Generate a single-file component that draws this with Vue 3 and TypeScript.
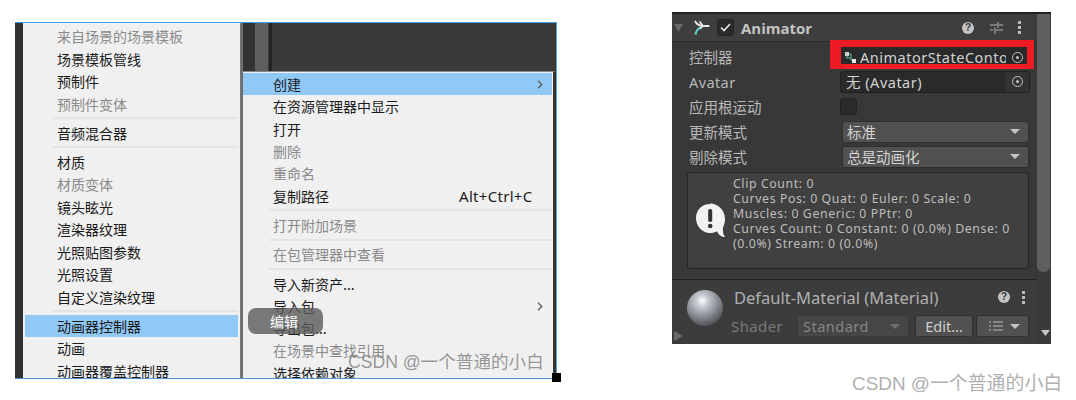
<script setup lang="ts">
interface Item { t?: string; off?: boolean; sel?: boolean; sep?: boolean; key?: string; arrow?: boolean }
const left: Item[] = [
  { t: '来自场景的场景模板', off: true }, { t: '场景模板管线' }, { t: '预制件' }, { t: '预制件变体', off: true }, { sep: true },
  { t: '音频混合器' }, { sep: true },
  { t: '材质' }, { t: '材质变体', off: true }, { t: '镜头眩光' }, { t: '渲染器纹理' }, { t: '光照贴图参数' }, { t: '光照设置' }, { t: '自定义渲染纹理' }, { sep: true },
  { t: '动画器控制器', sel: true }, { t: '动画' }, { t: '动画器覆盖控制器' },
]
const right: Item[] = [
  { t: '创建', sel: true, arrow: true }, { t: '在资源管理器中显示' }, { t: '打开' }, { t: '删除', off: true }, { t: '重命名', off: true },
  { t: '复制路径', key: 'Alt+Ctrl+C' }, { sep: true }, { t: '打开附加场景', off: true }, { sep: true }, { t: '在包管理器中查看', off: true }, { sep: true },
  { t: '导入新资产...' }, { t: '导入包', arrow: true }, { t: '导出包...' }, { t: '在场景中查找引用', off: true }, { t: '选择依赖对象' },
]
const stats = ['Clip Count: 0', 'Curves Pos: 0 Quat: 0 Euler: 0 Scale: 0', 'Muscles: 0 Generic: 0 PPtr: 0', 'Curves Count: 0 Constant: 0 (0.0%) Dense: 0', '(0.0%) Stream: 0 (0.0%)']
</script>

<template>
  <div class="page">
    <section class="shot">
      <div class="strip"></div>
      <div class="menu menu-left">
        <template v-for="(m, i) in left" :key="i">
          <div v-if="m.sep" class="sep"></div>
          <div v-else class="item" :class="{ off: m.off, sel: m.sel }"><span>{{ m.t }}</span></div>
        </template>
      </div>
      <div class="gap"></div>
      <div class="rightside">
        <div class="backdrop">
          <span class="bd-a"></span><span class="bd-b"></span><span class="bd-c"></span>
        </div>
        <div class="menu menu-right">
          <template v-for="(m, i) in right" :key="i">
            <div v-if="m.sep" class="sep"></div>
            <div v-else class="item" :class="{ off: m.off, sel: m.sel }">
              <span>{{ m.t }}</span>
              <span v-if="m.key" class="key">{{ m.key }}</span>
              <svg v-if="m.arrow" class="chev" width="6" height="9" viewBox="0 0 6 9"><path d="M1 .8 4.800 4.500 1 8.200" fill="none" stroke="#555" stroke-width="1.200" /></svg>
            </div>
          </template>
        </div>
      </div>
      <div class="bubble">编辑</div>
      <div class="mark mark-left">CSDN @一个普通的小白</div>
      <div class="handle"></div>
    </section>

    <div class="right-col">
      <section class="inspector">
        <div class="main">
          <header class="head">
            <svg class="tri" width="9" height="8" viewBox="0 0 9 8"><path d="M0 0h9L4.500 8z" fill="#6a6a6a" /></svg>
            <svg class="anim" width="16" height="15" viewBox="0 0 16 15">
              <path d="M1 1c1.500 3 3.500 4.500 7 5M5.500 1.500 9 6l-3.500 3M9 6h6.500" fill="none" stroke="#e8e8e8" stroke-width="1.800" />
              <path d="M6 7.500C3.500 9 2 11.500 1.500 14.500" fill="none" stroke="#5fe0d0" stroke-width="2" />
            </svg>
            <span class="check">
              <svg width="11" height="9" viewBox="0 0 11 9"><path d="M1 4.500 4 7.500 10 1" fill="none" stroke="#e6e6e6" stroke-width="1.600" /></svg>
            </span>
            <b class="title">Animator</b>
            <span class="q">?</span>
            <svg class="sliders" width="13" height="12" viewBox="0 0 13 12"><path d="M0 3h7M9 3h4M8 0v6M0 8h3M6 8h7M5 5.500v6.500" fill="none" stroke="#b5b5b5" /></svg>
            <span class="dots"><i></i><i></i><i></i></span>
          </header>

          <div class="row first">
            <label>控制器</label>
            <div class="obj obj-red">
              <svg width="13" height="13" viewBox="0 0 13 13"><rect x="1" y="1" width="4" height="4" fill="#cfcfcf" /><rect x="8" y="8" width="4" height="4" fill="#e8e8e8" /><path d="M5 3h2v6h1M3 5v2h3" fill="none" stroke="#58c8b8" /></svg>
              <span class="objname">AnimatorStateConto</span>
              <span class="pick"><i></i></span>
              <div class="redbox"></div>
            </div>
          </div>
          <div class="row">
            <label class="lat">Avatar</label>
            <div class="obj"><span class="objname pad">无 (Avatar)</span><span class="pick lit"><i></i></span></div>
          </div>
          <div class="row">
            <label>应用根运动</label>
            <span class="box"></span>
          </div>
          <div class="row">
            <label>更新模式</label>
            <div class="drop"><span>标准</span><em></em></div>
          </div>
          <div class="row">
            <label>剔除模式</label>
            <div class="drop"><span>总是动画化</span><em></em></div>
          </div>

          <div class="help">
            <svg class="warn" width="31" height="36" viewBox="0 0 31 36">
              <path d="M15 1C7 1 1 7 1 15s6 15 14 15c3 0 5-.6 7-1.800 1 2.800 4 5.800 8 5.800-2-2.500-2.400-5.800-2-9.500 1.300-2.500 2-5.500 2-8.500 0-9-7-15.500-15-15.500z" fill="#f2f2f2" />
              <rect x="13.200" y="6" width="4" height="13" rx="1.800" fill="#333" />
              <circle cx="15.200" cy="23" r="2.300" fill="#333" />
            </svg>
            <div class="stats"><div v-for="s in stats" :key="s">{{ s }}</div></div>
          </div>

          <div class="mat">
            <div class="mat-top">
              <span class="ball"></span>
              <div class="mat-body">
                <div class="mat-title">
                  <span>Default-Material (Material)</span>
                  <span class="q q2">?</span>
                  <span class="dots dots2"><i></i><i></i><i></i></span>
                </div>
                <div class="mat-tools">
                  <span class="shader">Shader</span>
                  <div class="drop d-std"><span>Standard</span><em></em></div>
                  <div class="btn">Edit...</div>
                  <div class="btn list">
                    <svg width="14" height="10" viewBox="0 0 14 10"><path d="M4 1h10M4 5h10M4 9h10M0 1h2M0 5h2M0 9h2" stroke="#b8b8b8" /></svg>
                    <em></em>
                  </div>
                </div>
              </div>
            </div>
            <svg class="tri2" width="9" height="10" viewBox="0 0 9 10"><path d="M0 0l9 5-9 5z" fill="#6a6a6a" /></svg>
          </div>
        </div>
        <aside class="scroll">
          <div class="thumb"></div>
          <svg class="down" width="9" height="6" viewBox="0 0 9 6"><path d="M0 0h9L4.500 6z" fill="#c4c4c4" /></svg>
        </aside>
      </section>
      <div class="mark mark-right">CSDN @一个普通的小白</div>
    </div>
  </div>
</template>

<style>
html, body { margin: 0; background: #fff; }
</style>

<style scoped>
.page { width: 1076px; height: 400px; display: flex; align-items: flex-start; background: #fff; overflow: hidden; font-family: "Noto Sans", "Noto Sans CJK SC", sans-serif; }
.shot { position: relative; width: 542px; height: 357px; margin: 22px 0 0 15px; flex: none; display: flex; align-items: flex-start; background: #3a3a3a; border-top: 1px solid #3f9ee8; border-right: 1px solid #4f9fe0; border-bottom: 1px solid #4f96d8; box-sizing: border-box; }
.strip { width: 8px; align-self: stretch; background: #333; }
.menu { background: #f0f0f0; overflow: hidden; box-sizing: border-box; font: 14px/22px "Noto Sans CJK SC", sans-serif; color: #1a1a1a; }
.menu-left { width: 218px; height: 355px; padding: 2px 2px 0 0; border-right: 1px solid #777; }
.gap { width: 2px; align-self: stretch; background: #6f6f6f; }
.rightside { width: 313px; align-self: stretch; flex: none; display: flex; flex-direction: column; }
.backdrop { height: 48px; flex: none; display: flex; background: #3a3a3a; }
.bd-a { width: 12px; background: #333; }
.bd-b { width: 13px; background: #5f5f5f; }
.bd-c { width: 3px; margin-left: 1px; background: #232323; }
.menu-right { flex: 1; min-height: 0; padding: 1px 1px 0 0; border-top: 1px solid #888; border-right: 3px solid #333; }
.item { height: 22.500px; padding-left: 32px; display: flex; align-items: center; position: relative; white-space: nowrap; margin-left: 2px; }
.menu-right .item { height: 22.300px; padding-left: 30px; margin-left: 0; }
.off { color: #8a8a8a; }
.sel { background: #90c8f6; }
.sep { height: 2px; background: #e4e4e4; margin: 2px 0 2.500px 30px; }
.menu-right .sep { margin: 2.500px 0 2.500px 26px; }
.key { position: absolute; left: 216px; font-family: "Noto Sans", sans-serif; font-size: 15px; letter-spacing: .3px; }
.chev { position: absolute; right: 9px; top: 7px; }
.bubble { position: absolute; left: 233px; top: 285px; width: 75px; height: 26px; border-radius: 8px; background: rgba(90, 90, 90, .8); color: #fff; font: 14px/26px "Noto Sans CJK SC", sans-serif; padding-left: 22px; box-sizing: border-box; }
.mark { font-family: "Liberation Sans", "Noto Sans CJK SC", sans-serif; white-space: nowrap; }
.mark-left { position: absolute; left: 333px; top: 325px; font-size: 17.600px; color: rgba(120, 120, 120, .75); }
.handle { position: absolute; left: 537px; top: 350px; width: 9px; height: 9px; background: #000; }

.right-col { margin: 12px 0 0 115px; width: 392px; flex: none; }
.inspector { width: 379px; height: 332px; background: #383838; display: flex; color: #c8c8c8; font-size: 14px; overflow: hidden; border-top: 2px solid #232323; box-sizing: border-box; }
.main { width: 365px; flex: none; }
.head { height: 27px; display: flex; align-items: center; background: #3e3e3e; border-bottom: 1px solid #2c2c2c; position: relative; }
.tri { margin-left: 2px; }
.anim { margin-left: 11px; }
.check { width: 17px; height: 17px; margin-left: 7px; background: #2a2a2a; border: 1px solid #222; border-radius: 3px; box-sizing: border-box; display: flex; align-items: center; justify-content: center; }
.title { margin-left: 7px; font: 700 15px "Open Sans", "Noto Sans", sans-serif; color: #c4c4c4; width: 221px; }
.q { width: 12px; height: 12px; border-radius: 50%; background: #c4c4c4; color: #383838; font: 700 10px/12px "Liberation Sans", sans-serif; text-align: center; }
.sliders { margin-left: 16px; }
.dots { display: flex; flex-direction: column; gap: 2px; margin-left: 15px; }
.dots i { display: block; width: 3px; height: 3px; background: #bcbcbc; }
.row { height: 25px; display: flex; align-items: center; padding-left: 17px; position: relative; }
.first { margin-top: 2px; }
label { width: 151px; flex: none; color: #b8b8b8; font: 14.500px "Noto Sans CJK SC", sans-serif; }
label.lat { font-family: "Noto Sans", sans-serif; letter-spacing: .4px; }
.obj { width: 190px; height: 22px; background: #2a2a2a; border: 1px solid #212121; border-radius: 3px; box-sizing: border-box; display: flex; align-items: center; position: relative; padding-left: 3px; color: #d2d2d2; }
.obj-red { padding-top: 1px; }
.objname { flex: 1; font: 14.500px "Noto Sans", "Noto Sans CJK SC", sans-serif; white-space: nowrap; overflow: hidden; margin-left: 3px; letter-spacing: .5px; }
.pad { margin-left: 2px; }
.pick { width: 23px; height: 100%; display: flex; align-items: center; justify-content: center; flex: none; }
.pick.lit { background: #333; }
.pick i { width: 11px; height: 11px; box-sizing: border-box; border: 1px solid #c4c4c4; border-radius: 50%; position: relative; }
.pick i::after { content: ""; position: absolute; left: 3px; top: 3px; width: 3px; height: 3px; border-radius: 50%; background: #c4c4c4; }
.redbox { position: absolute; left: -11px; right: -5px; top: -7px; bottom: -2px; border-style: solid; border-color: #ed1c24; border-width: 7px 7px 5px 11px; box-sizing: border-box; pointer-events: none; }
.box { width: 17px; height: 17px; background: #2a2a2a; border: 1px solid #222; border-radius: 3px; box-sizing: border-box; }
.drop { width: 187px; height: 22px; margin-left: 2px; background: #515151; border: 1px solid #2f2f2f; border-radius: 3px; box-sizing: border-box; display: flex; align-items: center; justify-content: space-between; padding: 0 8px 0 4px; color: #d4d4d4; font: 14.500px "Noto Sans CJK SC", "Noto Sans", sans-serif; }
em { display: block; width: 0; height: 0; border-left: 5px solid transparent; border-right: 5px solid transparent; border-top: 5px solid #c4c4c4; }
.help { margin: 3px 0 0 15px; width: 342px; height: 97px; box-sizing: border-box; background: #404040; border: 1px solid #232323; border-radius: 3px; display: flex; align-items: flex-start; padding: 3px 0 0 7px; }
.warn { margin-top: 27px; flex: none; }
.stats { margin-left: 7px; font: 12.300px/15px "Noto Sans", sans-serif; letter-spacing: .6px; color: #bdbdbd; white-space: nowrap; }
.mat { margin-top: 10px; border-top: 1px solid #232323; height: 65px; position: relative; background: #3c3c3c; }
.mat-top { display: flex; padding: 9px 0 0 15px; }
.ball { width: 36px; height: 36px; flex: none; margin-top: 1px; border-radius: 50%; background: radial-gradient(circle at 42% 30%, #fff 0, #c8ccd2 18%, #8a8e94 48%, #4a4c50 80%, #3a3a3c 100%); }
.mat-body { margin-left: 11px; flex: 1; }
.mat-title { display: flex; align-items: center; height: 16px; font: 16.500px "Noto Sans", sans-serif; color: #b0b0b0; }
.mat-title > span:first-child { width: 264px; white-space: nowrap; }
.q2 { margin-left: 0; }
.dots2 { margin-left: 12px; }
.mat-tools { display: flex; align-items: center; margin-top: 10px; margin-left: -3px; }
.shader { width: 66px; flex: none; color: #7a7a7a; font: 15px "Noto Sans", sans-serif; letter-spacing: .4px; }
.d-std { width: 112px; margin: 0; background: #464646; color: #858585; font-family: "Noto Sans", sans-serif; border-color: #3a3a3a; padding-left: 5px; letter-spacing: .5px; }
.d-std em { border-top-color: #6e6e6e; }
.btn { height: 22px; width: 58px; margin-left: 6px; background: #515151; border: 1px solid #303030; border-radius: 3px; box-sizing: border-box; color: #d0d0d0; font: 14.500px/20px "Noto Sans", sans-serif; text-align: center; }
.list { width: 53px; margin-left: 3px; display: flex; align-items: center; justify-content: space-between; padding: 0 8px 0 12px; }
.tri2 { position: absolute; left: 2px; bottom: 4px; }
.scroll { width: 14px; position: relative; background: #3a3a3a; }
.thumb { width: 13px; height: 258px; background: #5f5f5f; border-radius: 0 0 6px 6px; }
.down { position: absolute; left: 4px; bottom: 8px; }
.mark-right { margin-top: 24px; margin-left: 180px; font-size: 18.900px; color: #b0b0b0; }
</style>
